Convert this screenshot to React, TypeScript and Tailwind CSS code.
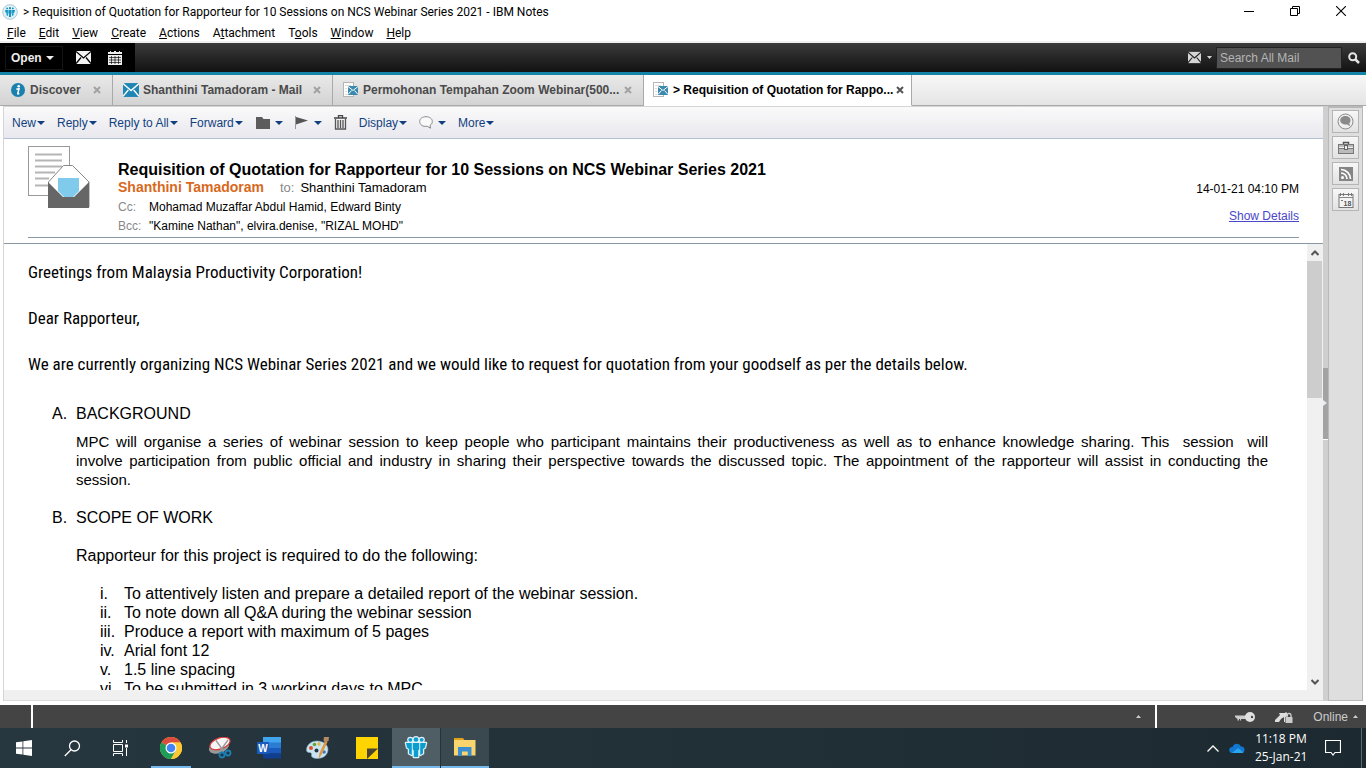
import React from "react";

const menuItems = [
  ["", "F", "ile"],
  ["", "E", "dit"],
  ["", "V", "iew"],
  ["", "C", "reate"],
  ["", "A", "ctions"],
  ["A", "t", "tachment"],
  ["T", "o", "ols"],
  ["", "W", "indow"],
  ["", "H", "elp"],
];

const scopeItems = [
  ["i.", "To attentively listen and prepare a detailed report of the webinar session."],
  ["ii.", "To note down all Q&A during the webinar session"],
  ["iii.", "Produce a report with maximum of 5 pages"],
  ["iv.", "Arial font 12"],
  ["v.", "1.5 line spacing"],
  ["vi.", "To be submitted in 3 working days to MPC"],
];

const backgroundLines = [
  "MPC will organise a series of webinar session to keep people who participant maintains their productiveness as well as to enhance knowledge sharing. This \u00a0session \u00a0will",
  "involve participation from public official and industry in sharing their perspective towards the discussed topic. The appointment of the rapporteur will assist in conducting the",
];

const Caret = ({ className = "" }: { className?: string }) => (
  <svg width="8" height="4" viewBox="0 0 8 4" className={className}>
    <path d="M0 0h8L4 4z" fill="currentColor" />
  </svg>
);

const EnvelopeIcon = ({ size = 15, gap = "#000" }: { size?: number; gap?: string }) => (
  <svg width={size} height={size} viewBox="0 0 15 15" className="shrink-0">
    <rect y="1" width="15" height="13" fill="currentColor" />
    <path d="M0 1.500l7.500 6.500L15 1.500M0 13.500l5-6M15 13.500l-5-6" stroke={gap} strokeWidth="1.300" fill="none" />
  </svg>
);

const DocMailIcon = () => (
  <svg width="16" height="16" viewBox="0 0 16 16" className="shrink-0">
    <rect x="0.500" y="0.500" width="10" height="14" fill="#fff" stroke="#b5b5b5" />
    <path d="M2 3.500h6M2 6.500h2M2 9.500h2M2 12.500h6" stroke="#ddd" />
    <rect x="5" y="4" width="10" height="9" fill="#3b89ad" />
    <path d="M5 4.500l5 4 5-4M5 12.500l3.500-4M15 12.500l-3.500-4" stroke="#fff" fill="none" />
  </svg>
);

// three people standing in a ring, used by the title bar and the taskbar
const NotesPeople = () => (
  <>
    <circle cx="12" cy="4.500" r="2.300" />
    <circle cx="6.300" cy="4.800" r="1.900" />
    <circle cx="17.700" cy="4.800" r="1.900" />
    <path d="M8.800 8h6.400v6.500l-1 .8V22H9.800v-6.700l-1-.8z" />
    <path d="M2 8h5.800v12L5 18.500V14l-2-1.500z" />
    <path d="M22 8h-5.800v12l2.800-1.500V14l2-1.500z" />
  </>
);

const CloseMark = ({ color }: { color: string }) => (
  <svg width="8" height="8" viewBox="0 0 8 8">
    <path d="M1 1l6 6M7 1L1 7" stroke={color} strokeWidth="2" />
  </svg>
);

const TitleBar = () => (
  <header className="flex h-6 shrink-0 items-center bg-white pr-[2px] pl-[2px] font-[Roboto,sans-serif] text-xs text-black">
    <svg width="16" height="16" viewBox="0 0 16 16" className="shrink-0">
      <circle cx="8" cy="8" r="7.300" fill="#e3f1f6" stroke="#a9cbd6" />
      <g fill="#1496c4" transform="translate(2 2) scale(0.5)">
        <NotesPeople />
      </g>
    </svg>
    <h1 className="ml-[5px] flex-1 truncate">
      &gt; Requisition of Quotation for Rapporteur for 10 Sessions on NCS Webinar Series 2021 - IBM Notes
    </h1>
    <button aria-label="Minimize" className="flex h-6 w-[46px] items-center justify-center">
      <svg width="10" height="10" viewBox="0 0 10 10">
        <path d="M0 4.500h10" stroke="#000" />
      </svg>
    </button>
    <button aria-label="Restore" className="flex h-6 w-[46px] items-center justify-center pb-[3px]">
      <svg width="10" height="10" viewBox="0 0 10 10" fill="none" stroke="#000">
        <path d="M0.500 2.500h7v7h-7zM2.500 2.500v-2h7v7h-2" />
      </svg>
    </button>
    <button aria-label="Close" className="flex h-6 w-[46px] items-center justify-center pb-[3px]">
      <svg width="10" height="10" viewBox="0 0 10 10">
        <path d="M0 0l10 10M10 0L0 10" stroke="#000" strokeWidth="1.100" />
      </svg>
    </button>
  </header>
);

const MenuBar = () => (
  <nav className="flex h-[19px] shrink-0 items-center gap-[13px] border-b-2 border-[#f0f0f0] bg-white pl-[7px] font-[Roboto,sans-serif] text-xs text-black">
    {menuItems.map(([before, key, after]) => (
      <button key={before + key + after}>
        {before}
        <span className="underline">{key}</span>
        {after}
      </button>
    ))}
  </nav>
);

const LaunchBar = () => (
  <div className="flex h-8 shrink-0 items-stretch border-b-3 border-[#1583a8] bg-linear-to-b from-[#3c3c3c] to-[#121212]">
    <div className="flex w-[135px] items-center gap-2 bg-black pl-[5px] text-white">
      <button className="flex h-6 w-[58px] items-center gap-1 border border-[#151515] pl-[5px] text-xs font-bold text-[#eee]">
        Open
        <Caret />
      </button>
      <button aria-label="Mail" className="flex h-6 w-6 items-center justify-center text-[#f2f2f2]">
        <EnvelopeIcon />
      </button>
      <button aria-label="Calendar" className="flex h-6 w-6 items-center justify-center">
        <svg width="14" height="14" viewBox="0 0 14 14">
          <path d="M0 1h2V0h1v1h3V0h2v1h3V0h1v1h2v2H0z" fill="#eee" />
          <rect y="4" width="14" height="10" fill="#eee" />
          <path d="M1 6.500h12M1 9h12M1 11.500h12M3.500 5v8M7 5v8M10.500 5v8" stroke="#111" strokeWidth="0.700" />
        </svg>
      </button>
    </div>
    <div className="ml-auto flex items-center text-[#d5d5d5]">
      <button aria-label="Search scope" className="flex items-center gap-[6px] pr-1">
        <EnvelopeIcon size={13} gap="#222" />
        <svg width="5" height="3" viewBox="0 0 5 3">
          <path d="M0 0h5L2.500 3z" fill="currentColor" />
        </svg>
      </button>
      <input
        type="text"
        aria-label="Search All Mail"
        placeholder="Search All Mail"
        className="h-[22px] w-[126px] border border-[#222] bg-[#525252] px-[3px] text-xs placeholder:text-[#b4b4b4]"
      />
      <button aria-label="Search" className="flex w-6 justify-center">
        <svg width="12" height="12" viewBox="0 0 12 12" fill="none" stroke="#e4e4e4">
          <circle cx="4.700" cy="4.700" r="3.500" strokeWidth="2" />
          <path d="M7.500 7.500L11 11" strokeWidth="2.500" />
        </svg>
      </button>
    </div>
  </div>
);

const Tab = ({
  icon,
  label,
  width,
  active = false,
}: {
  icon: React.ReactNode;
  label: string;
  width: string;
  active?: boolean;
}) => (
  <div
    className={`flex items-center border-r border-b border-r-[#a9a9a9] ${width} ${
      active
        ? "border-b-white bg-white pr-[7px] pl-[9px] text-black"
        : "border-b-[#a9a9a9] bg-linear-to-b from-[#e9e9e9] to-[#d3d3d3] pr-[11px] pl-[10px] text-[#4a4a4a]"
    }`}
  >
    <button role="tab" aria-selected={active} className="flex min-w-0 flex-1 items-center gap-1 font-bold">
      {icon}
      <span className="whitespace-nowrap">{label}</span>
    </button>
    <button aria-label={"Close " + label}>
      <CloseMark color={active ? "#555" : "#a2a2a2"} />
    </button>
  </div>
);

const TabStrip = () => (
  <div
    role="tablist"
    className="flex h-[31px] shrink-0 bg-linear-to-b from-[#f7f7f7] to-[#e4e4e4] text-xs"
  >
    <Tab
      width="w-[113px]"
      label="Discover"
      icon={
        <svg width="16" height="16" viewBox="0 0 16 16" className="shrink-0">
          <circle cx="8" cy="8" r="7" fill="#1a80ad" />
          <circle cx="8.700" cy="4.300" r="1.300" fill="#fff" />
          <path d="M6.300 7.300L9 6.700 7.800 11.500c-.1.700.6.400 1.400-.2" stroke="#fff" strokeWidth="1.500" fill="none" />
        </svg>
      }
    />
    <Tab
      width="w-[220px]"
      label="Shanthini Tamadoram - Mail"
      icon={
        <span className="text-[#1f85b3]">
          <EnvelopeIcon size={16} gap="#fff" />
        </span>
      }
    />
    <Tab width="w-[311px]" label="Permohonan Tempahan Zoom Webinar(500..." icon={<DocMailIcon />} />
    <Tab width="w-[268px]" label="> Requisition of Quotation for Rappo..." icon={<DocMailIcon />} active />
    <div className="flex-1 border-b border-[#a9a9a9]" />
  </div>
);

const ActionButton = ({ label, children }: { label: string; children?: React.ReactNode }) => (
  <button aria-label={label} className="flex items-center gap-px whitespace-nowrap">
    {children ? <span className="mr-1">{children}</span> : label}
    <Caret />
  </button>
);

const ActionBar = () => (
  <div className="flex h-8 shrink-0 items-center gap-3 border-b border-[#b3bfd3] bg-linear-to-b from-[#fafafa] to-[#e8e8ee] pl-2 text-xs text-[#123f80]">
    <ActionButton label="New" />
    <ActionButton label="Reply" />
    <ActionButton label="Reply to All" />
    <ActionButton label="Forward" />
    <ActionButton label="Folder">
      <svg width="15" height="12" viewBox="0 0 15 12">
        <path d="M1 0h6l1.500 2H15v10H1z" fill="#5c5c5c" />
      </svg>
    </ActionButton>
    <ActionButton label="Follow up">
      <svg width="14" height="13" viewBox="0 0 14 13">
        <path d="M0.500 0v13" stroke="#999" />
        <path d="M1 1l12 3.500L1 8.500z" fill="#555" />
      </svg>
    </ActionButton>
    <button aria-label="Delete">
      <svg width="13" height="15" viewBox="0 0 13 15">
        <path d="M0 3h13M4.500 2.500V.5h4v2" stroke="#444" fill="none" strokeWidth="1.300" />
        <path d="M1.500 4v10h10V4M4 5v8M6.500 5v8M9 5v8" stroke="#555" fill="none" strokeWidth="1.300" />
      </svg>
    </button>
    <ActionButton label="Display" />
    <ActionButton label="Chat">
      <svg width="14" height="13" viewBox="0 0 14 13">
        <path d="M7 .7c3.600 0 6.300 2 6.300 4.800 0 1.700-.9 3-2.300 3.900l.6 2.800-3.400-1.900C3.500 10.900.7 8.500.7 5.500.7 2.700 3.400.7 7 .7z" fill="#fafafa" stroke="#888" />
      </svg>
    </ActionButton>
    <ActionButton label="More" />
  </div>
);

const MessageHeader = () => (
  <section className="h-[105px] shrink-0 border-b border-[#8a97a5] pr-6 pl-6">
    <div className="flex h-[99px] border-b border-[#8a97a5]">
      <svg width="62" height="62" viewBox="0 0 62 62" className="mt-[7px] shrink-0">
        <rect x="0.500" y="0.500" width="41" height="49" fill="#fff" stroke="#999" />
        <path d="M7 8.500h27M7 14.500h27M7 20.500h27M7 26.500h20M7 32.500h14M7 39.500h14" stroke="#b5b5b5" strokeWidth="2" />
        <path d="M20.500 36L35.500 19.500h9L61 36v25H20.500z" fill="#fff" stroke="#888" />
        <path d="M20 36l15 15h11l15-15v26H20z" fill="#666" />
        <path d="M30 32h21v13l-6 6h-9l-6-6z" fill="#80caec" />
      </svg>
      <div className="flex-1 pt-[22px] pl-7">
        <h2 className="text-base leading-[18px] font-bold text-black">
          Requisition of Quotation for Rapporteur for 10 Sessions on NCS Webinar Series 2021
        </h2>
        <div className="flex items-center text-[13px] leading-[17px] text-black">
          <span className="text-sm leading-[17px] font-bold text-[#d8691c]">Shanthini Tamadoram</span>
          <span className="mr-[6px] ml-4 text-[#888]">to:</span>
          <span>Shanthini Tamadoram</span>
        </div>
        <dl className="grid grid-cols-[31px_1fr] pt-[2px] text-xs leading-[19px] text-black">
          <dt className="text-[#888]">Cc:</dt>
          <dd>Mohamad Muzaffar Abdul Hamid, Edward Binty</dd>
          <dt className="text-[#888]">Bcc:</dt>
          <dd>"Kamine Nathan", elvira.denise, "RIZAL MOHD"</dd>
        </dl>
      </div>
      <div className="flex flex-col items-end gap-[9px] pt-[41px] text-xs leading-[18px] text-black">
        <time>14-01-21 04:10 PM</time>
        <a href="#" className="text-[#4a46c8] underline">
          Show Details
        </a>
      </div>
    </div>
  </section>
);

const MessageBody = () => (
  <article className="min-w-0 flex-1 overflow-hidden pt-[17px] pr-[39px] pl-6 text-base leading-[19px] text-black">
    <div className="flex flex-col gap-[23px] font-['Roboto_Condensed','Liberation_Sans',sans-serif] text-[17px] leading-[23px]">
      <p>Greetings from Malaysia Productivity Corporation!</p>
      <p>Dear Rapporteur,</p>
      <p>
        We are currently organizing NCS Webinar Series 2021 and we would like to request for quotation from your
        goodself as per the details below.
      </p>
    </div>
    <ol className="pt-7 pl-6">
      <li className="grid grid-cols-[24px_minmax(0,1fr)]">
        <span>A.</span>
        <h3>BACKGROUND</h3>
        <div className="col-start-2 pt-[9px] text-[15px] leading-[19px]">
          {backgroundLines.map((line) => (
            <span key={line} className="block text-justify [text-align-last:justify]">
              {line}
            </span>
          ))}
          <span className="block">session.</span>
        </div>
      </li>
      <li className="grid grid-cols-[24px_minmax(0,1fr)] pt-[19px]">
        <span>B.</span>
        <h3>SCOPE OF WORK</h3>
        <div className="col-start-2 pt-[19px]">
          <p>Rapporteur for this project is required to do the following:</p>
          <ol className="pt-[19px] pl-6">
            {scopeItems.map(([num, text]) => (
              <li key={num} className="grid grid-cols-[24px_1fr]">
                <span>{num}</span>
                <span>{text}</span>
              </li>
            ))}
          </ol>
        </div>
      </li>
    </ol>
  </article>
);

const ScrollBar = () => (
  <div className="flex w-4 shrink-0 flex-col bg-[#f0f0f0]">
    <button aria-label="Scroll up" className="flex h-[17px] items-center justify-center">
      <svg width="8" height="6" viewBox="0 0 8 6">
        <path d="M0.500 5L4 1.500 7.500 5" stroke="#555" strokeWidth="2" fill="none" />
      </svg>
    </button>
    <div className="flex-1">
      <div className="h-1/3 w-[15px] bg-[#cdcdcd]" />
    </div>
    <button aria-label="Scroll down" className="flex h-[17px] items-center justify-center">
      <svg width="8" height="6" viewBox="0 0 8 6">
        <path d="M0.500 1L4 4.500 7.500 1" stroke="#555" strokeWidth="2" fill="none" />
      </svg>
    </button>
  </div>
);

const SideButton = ({ label, children }: { label: string; children: React.ReactNode }) => (
  <button
    aria-label={label}
    className="flex h-[23px] w-[27px] items-center justify-center border border-[#b5b5b5] bg-linear-to-b from-[#f7f7f7] to-[#e2e2e2]"
  >
    {children}
  </button>
);

const SideBar = () => (
  <aside className="mr-[3px] flex w-[35px] shrink-0 flex-col items-center gap-[3px] border border-t-2 border-[#b8b8b8] bg-[#dedede] pt-[2px]">
    <SideButton label="Sametime">
      <svg width="17" height="17" viewBox="0 0 17 17">
        <circle cx="8.500" cy="8.500" r="7.500" fill="#eee" stroke="#888" />
        <path d="M8.500 3c3 0 5 1.800 5 4.200 0 1.300-.5 2.300-1.300 3l1 3-3-1.700C6 12 3.200 10 3.200 7.300 3.200 4.800 5.500 3 8.500 3z" fill="#8a8a8a" />
      </svg>
    </SideButton>
    <SideButton label="Toolbox">
      <svg width="16" height="13" viewBox="0 0 16 13">
        <path d="M5.500 3V1.500h5V3" stroke="#555" strokeWidth="1.500" fill="none" />
        <rect x="0.500" y="3.500" width="15" height="9" fill="#bbb" stroke="#777" />
        <path d="M1 6.500h14" stroke="#f5f5f5" />
        <path d="M1 7.500h14" stroke="#777" />
        <rect x="6.500" y="4.500" width="3" height="4" fill="#eee" stroke="#666" />
      </svg>
    </SideButton>
    <SideButton label="Feeds">
      <svg width="14" height="14" viewBox="0 0 14 14">
        <rect width="14" height="14" fill="#858585" />
        <circle cx="3.500" cy="10.500" r="1.500" fill="#fff" />
        <path d="M2 6a6 6 0 0 1 6 6M2 2.500A9.500 9.500 0 0 1 11.500 12" stroke="#fff" strokeWidth="1.700" fill="none" />
      </svg>
    </SideButton>
    <SideButton label="Day at a glance">
      <svg width="16" height="16" viewBox="0 0 16 16">
        <rect x="1" y="2.500" width="14" height="13" fill="#f4f4f4" stroke="#777" />
        <path d="M1 5.500h14" stroke="#888" />
        <path d="M2.500 1v3M5.500 1v3M10.500 1v3M13.500 1v3" stroke="#777" />
        <path d="M3 8.500h2" stroke="#777" />
        <text x="5.500" y="13.500" fontSize="7" fontWeight="700" fill="#555" fontFamily="Liberation Sans">
          18
        </text>
      </svg>
    </SideButton>
  </aside>
);

const StatusBar = () => (
  <footer className="flex h-[23px] shrink-0 items-center bg-[#444] text-[#ccc]">
    <div className="h-full w-[33px] border-r-2 border-white" />
    <div className="flex h-full flex-1 items-center justify-end border-r-2 border-white pr-[14px]">
      <svg width="5" height="3" viewBox="0 0 5 3">
        <path d="M0 3h5L2.500 0z" fill="#ccc" />
      </svg>
    </div>
    <div className="flex w-[209px] items-center justify-end gap-5 pr-2">
      <svg width="20" height="12" viewBox="0 0 20 12">
        <path d="M0 4.500h11V8H6v1.500H5V8H4v1.500H2.500V8L0 6z" fill="#ccc" />
        <circle cx="15" cy="6" r="5" fill="#e0e0e0" />
        <circle cx="17" cy="6" r="1.200" fill="#444" />
      </svg>
      <svg width="18" height="12" viewBox="0 0 18 12">
        <path d="M0 9l5-5-1-2h6l1-1 2 2v2l-3 1v5H9V6L6 8l-2 3H0z" fill="#ddd" />
        <rect x="10.500" y="6" width="7" height="6" fill="#ccc" />
        <path d="M12 6V4.500a2 2 0 0 1 4 0V6" stroke="#ccc" strokeWidth="1.300" fill="none" />
      </svg>
      <button className="flex items-center gap-[5px] text-xs">
        Online
        <svg width="5" height="3" viewBox="0 0 5 3">
          <path d="M0 3h5L2.500 0z" fill="#ccc" />
        </svg>
      </button>
    </div>
  </footer>
);

const TaskButton = ({
  label,
  state = "",
  children,
}: {
  label: string;
  state?: string;
  children: React.ReactNode;
}) => (
  <button aria-label={label} className={`flex w-12 items-center justify-center ${state}`}>
    {children}
  </button>
);

const TaskBar = () => (
  <div className="flex h-10 shrink-0 items-stretch bg-linear-to-r from-[#27373f] to-[#1c2930]">
    <TaskButton label="Start">
      <svg width="16" height="16" viewBox="0 0 16 16" fill="#fff">
        <path d="M0 2.300l6.500-.9v6.200H0zM7.300 1.300L16 0v7.600H7.300zM0 8.400h6.500v6.200L0 13.700zM7.300 8.400H16V16l-8.700-1.300z" />
      </svg>
    </TaskButton>
    <TaskButton label="Search">
      <svg width="17" height="17" viewBox="0 0 17 17" fill="none" stroke="#fff" strokeWidth="1.300">
        <circle cx="10.500" cy="6" r="5" />
        <path d="M7 9.700L.8 16" />
      </svg>
    </TaskButton>
    <TaskButton label="Task View">
      <svg width="17" height="16" viewBox="0 0 17 16" fill="none" stroke="#fff">
        <path d="M1.500 4.500h9v7h-9zM1.500 0v2.500h9V0M1.500 16v-2.500h9V16M14.500 0v3M14.500 8v8" />
        <path d="M13 4.500h3v3h-3z" fill="#fff" stroke="none" />
      </svg>
    </TaskButton>
    <div className="ml-[3px] flex gap-px">
      <TaskButton
        label="Chrome"
        state="relative after:absolute after:inset-x-1 after:bottom-0 after:h-[2px] after:bg-[#76b9ed]"
      >
        <svg width="22" height="22" viewBox="0 0 22 22">
          <circle cx="11" cy="11" r="11" fill="#fcc934" />
          <path d="M11 11L1.470 5.500A11 11 0 0 1 20.530 5.500H11z" fill="#dd4b3e" />
          <path d="M1.470 5.500A11 11 0 0 0 11 22l4.760-8.250L11 11z" fill="#1e9d58" />
          <path d="M11 5.500h9.530A11 11 0 0 1 11 22l4.760-8.250z" fill="#fcc934" />
          <circle cx="11" cy="11" r="5.500" fill="#fff" />
          <circle cx="11" cy="11" r="4.300" fill="#4385f4" />
        </svg>
      </TaskButton>
      <TaskButton label="Snipping Tool">
        <svg width="24" height="22" viewBox="0 0 24 22">
          <ellipse cx="11" cy="10" rx="10.500" ry="6" transform="rotate(-20 11 10)" fill="#999" />
          <ellipse cx="12" cy="6.500" rx="10.500" ry="5.500" transform="rotate(-20 12 6.500)" fill="#f6f6f6" stroke="#d33b35" strokeWidth="1.200" />
          <path d="M8 3.500l8 11M20 3l-8 11" stroke="#999" strokeWidth="1.300" />
          <circle cx="14" cy="18" r="2.500" fill="none" stroke="#1a7fb5" strokeWidth="1.800" />
          <circle cx="20" cy="16" r="2.500" fill="none" stroke="#1a7fb5" strokeWidth="1.800" />
        </svg>
      </TaskButton>
      <TaskButton label="Word">
        <svg width="24" height="22" viewBox="0 0 24 22">
          <rect x="6" y="0" width="18" height="6" fill="#41a5ee" />
          <rect x="6" y="5.500" width="18" height="5.500" fill="#2b7cd3" />
          <rect x="6" y="11" width="18" height="5.500" fill="#185abd" />
          <rect x="6" y="16.500" width="18" height="5" fill="#103f91" />
          <rect x="0" y="5" width="12" height="12" fill="#185abd" />
          <text x="1.300" y="14.500" fontSize="10" fontWeight="700" fill="#fff" fontFamily="Liberation Sans">
            W
          </text>
        </svg>
      </TaskButton>
      <TaskButton label="Paint">
        <svg width="24" height="24" viewBox="0 0 24 24">
          <path d="M11 5C5 5 .5 9 .5 14c0 2 1.500 2.500 3 2.500s2.500 1 2 2.500c-.5 2 2 3.500 6 3.500 6 0 10.500-4 10.500-9S17 5 11 5z" fill="#cbe4f2" stroke="#7fa9c4" strokeWidth="0.600" />
          <circle cx="5" cy="12" r="2" fill="#d9512c" />
          <circle cx="8.500" cy="8.500" r="1.800" fill="#5aa83c" />
          <circle cx="13" cy="8" r="1.700" fill="#e9b53f" />
          <circle cx="10.500" cy="14.500" r="2" fill="#27373f" />
          <circle cx="18" cy="16" r="1.800" fill="#3b78c9" />
          <path d="M12.500 23l1-6 5.500-12 2.500 1-5.500 12z" fill="#e09a43" />
          <path d="M18 1l5 0-.5 4-3.500 1.500-1.500-2z" fill="#b78a62" />
        </svg>
      </TaskButton>
      <TaskButton label="Sticky Notes">
        <svg width="22" height="22" viewBox="0 0 22 22">
          <path d="M0 0h22v22H0z" fill="#ffd400" />
          <path d="M11 11.500h11L11 22z" fill="#4a4533" />
        </svg>
      </TaskButton>
      <TaskButton label="IBM Notes" state="border-b-2 border-[#76b9ed] bg-[#4f5d65]">
        <svg width="24" height="24" viewBox="0 0 24 24">
          <g fill="#dff0f7" stroke="#dff0f7" strokeWidth="2.500" strokeLinejoin="round">
            <NotesPeople />
          </g>
          <g fill="#0a9ed0">
            <NotesPeople />
          </g>
        </svg>
      </TaskButton>
      <TaskButton label="File Explorer" state="border-b-2 border-[#76b9ed] bg-[#3a4950]">
        <svg width="22" height="18" viewBox="0 0 22 18">
          <path d="M0 0h9l1.500 2H0z" fill="#e0a11b" />
          <path d="M0 2h21.500v15.500H0z" fill="#fad56e" />
          <path d="M4 18V9h13.500v9h-3.700v-4.500H8V18z" fill="#3b8fd0" />
        </svg>
      </TaskButton>
    </div>
    <div className="ml-auto flex items-center font-['Open_Sans',sans-serif] text-xs text-white">
      <button aria-label="Show hidden icons" className="mr-[10px]">
        <svg width="12" height="7" viewBox="0 0 12 7" fill="none" stroke="#fff" strokeWidth="1.300">
          <path d="M0.500 6.500L6 1l5.500 5.500" />
        </svg>
      </button>
      <svg width="16" height="10" viewBox="0 0 16 10">
        <path d="M3.500 4A4.500 4.500 0 0 1 12 3.500 3.300 3.300 0 0 1 13 10H3A3 3 0 0 1 3.500 4z" fill="#1177d1" />
        <path d="M3 10l6-5 5.500 4.500L13 10z" fill="#29a6ee" />
      </svg>
      <div className="ml-[10px] w-[52px] text-center leading-[18px] whitespace-nowrap">
        11:18 PM
        <br />
        25-Jan-21
      </div>
      <button aria-label="Notifications" className="mr-[20px] ml-[18px]">
        <svg width="16" height="16" viewBox="0 0 16 16" fill="none" stroke="#fff">
          <path d="M0.500 0.500h15v12H10L8 15l-2-2.500H.5z" strokeWidth="1.200" />
        </svg>
      </button>
      <button aria-label="Show desktop" className="h-full w-[5px] border-l border-[#5c686e]" />
    </div>
  </div>
);

export default function App() {
  return (
    <div className="flex h-screen flex-col overflow-hidden bg-white font-['Liberation_Sans',Arial,sans-serif]">
      <TitleBar />
      <MenuBar />
      <LaunchBar />
      <TabStrip />
      <main className="flex min-h-0 flex-1 bg-white pb-1 pl-[3px]">
        <div className="flex min-w-0 flex-1 flex-col border-t border-l border-[#d5d5d5]">
          <ActionBar />
          <MessageHeader />
          <div className="flex min-h-0 flex-1">
            <MessageBody />
            <ScrollBar />
          </div>
          <div className="h-[11px] shrink-0 border-b border-[#dadada] bg-[#f0f0f0]" />
        </div>
        <div className="flex w-[5px] shrink-0 flex-col justify-center bg-[#cfcfcf]">
          <button
            aria-label="Collapse sidebar"
            className="flex h-[72px] items-center border-b border-white bg-[#a3a3a3]"
          >
            <svg width="4" height="6" viewBox="0 0 4 6">
              <path d="M0 0l4 3-4 3z" fill="#e4ecf5" />
            </svg>
          </button>
        </div>
        <SideBar />
      </main>
      <StatusBar />
      <TaskBar />
    </div>
  );
}
